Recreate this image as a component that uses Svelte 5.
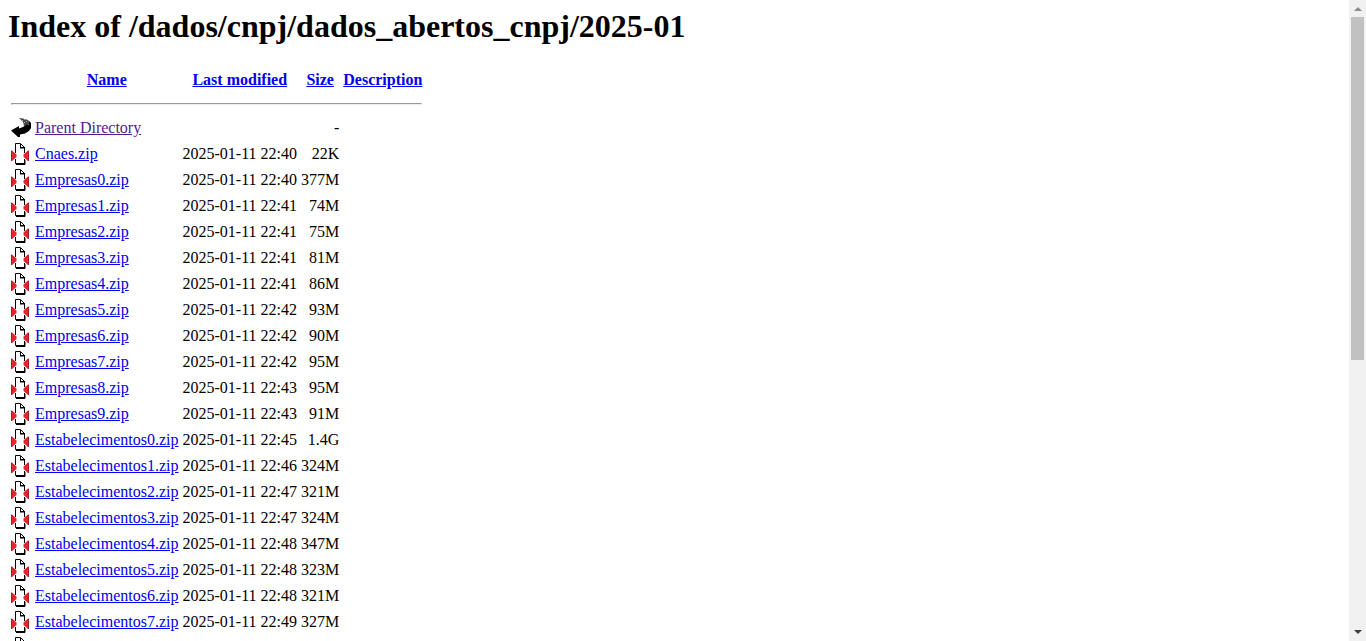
<script>
  const columns = ['Name', 'Last modified', 'Size', 'Description'];
  const files = [
    ['Cnaes.zip', '22:40', '22K'],
    ['Empresas0.zip', '22:40', '377M'],
    ['Empresas1.zip', '22:41', '74M'],
    ['Empresas2.zip', '22:41', '75M'],
    ['Empresas3.zip', '22:41', '81M'],
    ['Empresas4.zip', '22:41', '86M'],
    ['Empresas5.zip', '22:42', '93M'],
    ['Empresas6.zip', '22:42', '90M'],
    ['Empresas7.zip', '22:42', '95M'],
    ['Empresas8.zip', '22:43', '95M'],
    ['Empresas9.zip', '22:43', '91M'],
    ['Estabelecimentos0.zip', '22:45', '1.4G'],
    ['Estabelecimentos1.zip', '22:46', '324M'],
    ['Estabelecimentos2.zip', '22:47', '321M'],
    ['Estabelecimentos3.zip', '22:47', '324M'],
    ['Estabelecimentos4.zip', '22:48', '347M'],
    ['Estabelecimentos5.zip', '22:48', '323M'],
    ['Estabelecimentos6.zip', '22:48', '321M'],
    ['Estabelecimentos7.zip', '22:49', '327M'],
    ['Estabelecimentos8.zip', '22:49', '324M']
  ];
</script>

<div class="window">
  <main>
    <h1>Index of /dados/cnpj/dados_abertos_cnpj/2025-01</h1>
    <table>
      <thead>
        <tr>
          <td class="icon"></td>
          {#each columns as column}
            <th><a href="#sort">{column}</a></th>
          {/each}
        </tr>
        <tr><td colspan="5"><hr /></td></tr>
      </thead>
      <tbody>
        <tr>
          <td class="icon">
            <svg width="20" height="22" viewBox="0 0 20 22" aria-hidden="true">
              <path d="M8 1l4 .5 5 1.5 2.5 3-3.500 2.500-3 .5L12 5z" fill="#484848" />
              <path d="M9 2h1v1H9zM11 3h1v1h-1zM13 2h1v1h-1zM13 5h1v1h-1zM15 4h1v1h-1z" fill="#aaa" />
              <path d="M18 4l2 2v5l-2 3-4 2.500-5 1V20H7l-7-6.500L8 9v2.500l4-1.500 3-2 3-.5z" />
            </svg>
          </td>
          <td><a class="visited" href="#parent">Parent Directory</a></td>
          <td></td>
          <td class="right">-</td>
          <td></td>
        </tr>
        {#each files as [name, time, size]}
          <tr>
            <td class="icon">
              <svg width="20" height="22" viewBox="0 0 20 22" aria-hidden="true">
                <path d="M4.500 10V.5h5l4 4V10M4.500 16v4.500h9V16" fill="none" stroke="#000" />
                <path d="M9 1h1v3h4v1.500H9zM5 20h9v2H5zM13 17h1.500v4.500H13z" />
                <path d="M0 7.500h1l4.500 4V14L1 18H0zM18 7.500h-1l-4.500 4V14l4.500 4h1z" fill="#e3262e" />
                <path d="M.5 8v10M17.500 8v10" stroke="#a91c24" />
              </svg>
            </td>
            <td><a href="#{name}">{name}</a></td>
            <td class="right">2025-01-11 {time}</td>
            <td class="right">{size}</td>
            <td></td>
          </tr>
        {/each}
      </tbody>
    </table>
  </main>
  <div class="scrollbar" aria-hidden="true">
    <svg width="17" height="17" viewBox="0 0 17 17"><path d="M5 11l4-4 4 4z" fill="#8b8b8b" /></svg>
    <div class="track"><div class="thumb"></div></div>
    <svg width="17" height="17" viewBox="0 0 17 17"><path d="M5 6l4 4 4-4z" fill="#404040" /></svg>
  </div>
</div>

<style>
  :global(body) {
    background: #fff;
    color: #000;
    font: 16px "Liberation Serif", "Times New Roman", serif;
  }
  .window {
    display: flex;
    height: 100vh;
    overflow: hidden;
  }
  main {
    flex: 1;
    min-width: 0;
    padding: 8px;
    overflow-y: auto;
    scrollbar-width: none;
  }
  h1 {
    margin: 0 0 21px;
    font-size: 32px;
    line-height: 37px;
  }
  table {
    border-spacing: 2px;
    line-height: 18px;
  }
  th,
  td {
    padding: 1px;
    white-space: nowrap;
  }
  .icon {
    width: 20px;
    height: 22px;
  }
  .icon svg {
    display: block;
  }
  .right {
    text-align: right;
  }
  hr {
    margin: 8px 0;
  }
  a {
    color: #0000ee;
  }
  .visited {
    color: #551a8b;
  }
  .scrollbar {
    display: flex;
    flex-direction: column;
    width: 17px;
    background: #f1f1f1;
  }
  .scrollbar svg {
    display: block;
  }
  .track {
    flex: 1;
    padding: 0 2px;
  }
  .thumb {
    height: 56.5%;
    background: #c1c1c1;
  }
</style>
